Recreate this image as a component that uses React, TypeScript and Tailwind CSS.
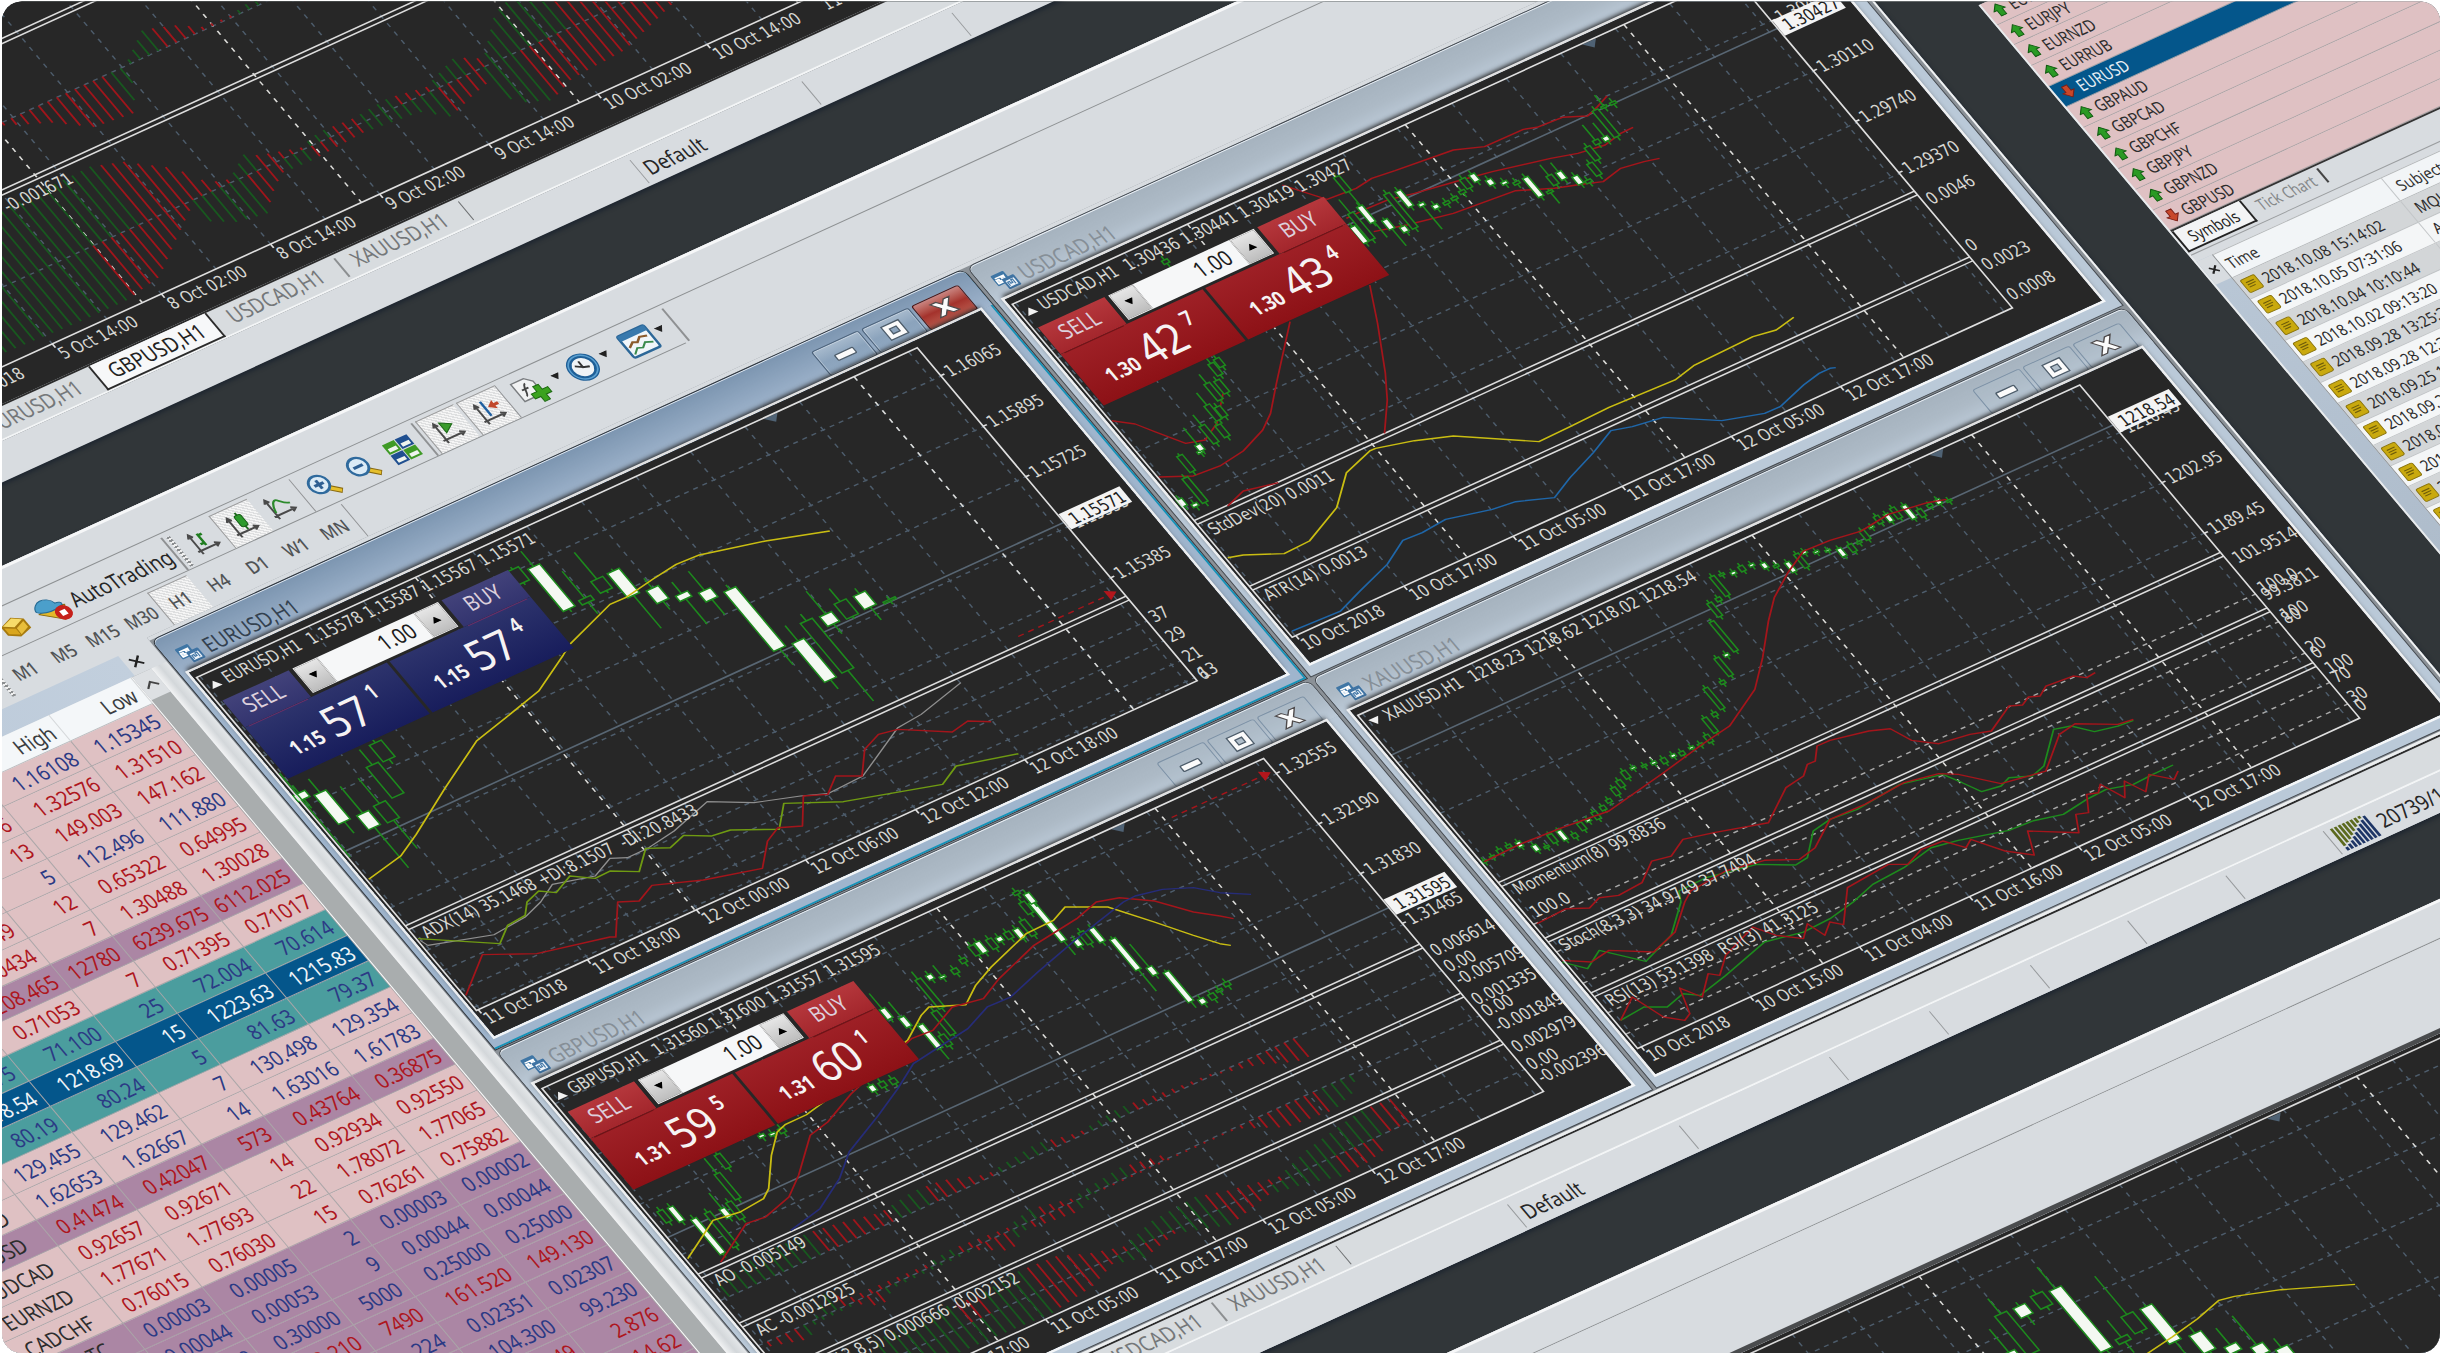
import React from 'react';

/* ------------------------------------------------------------------ */
/* Geometry: the desktop is a skewed plane; (u, v) are plane units.    */
/* Traces are stored per sheet cell: [column, row, x, y, x, y, ...]    */
/* ------------------------------------------------------------------ */
type Pt = [number, number];

function plane(col: number, row: number, x: number, y: number): Pt {
  const px = col * 610 + x / 2.5705;
  const py = row * 451 + y / 3;
  return [0.7943 * px - 0.6675 * py, 0.4316 * px + 0.9435 * py];
}

type Seg = number[];

function trace(segs: Seg[]): string {
  const out: string[] = [];
  segs.forEach((s) => {
    for (let i = 2; i < s.length; i += 2) {
      const [u, v] = plane(s[0], s[1], s[i], s[i + 1]);
      out.push(u.toFixed(1) + ',' + v.toFixed(1));
    }
  });
  return out.join(' ');
}

const GRID = '#4d5c6b';
const RED = '#a3151b';
const GREEN = '#1d8a1d';
const YELLOW = '#c9bd12';
const BLUE = '#1f66a8';
const NAVY = '#262c78';

/* Text stretched to the tall, narrow letterforms of the terminal */
function Tall({ children, className = '' }: { children: React.ReactNode; className?: string }) {
  return <span className={'inline-block scale-y-[1.22] ' + className}>{children}</span>;
}

function Line({ segs, color, w = 1.6 }: { segs: Seg[]; color: string; w?: number }) {
  return <polyline points={trace(segs)} fill="none" stroke={color} strokeWidth={w} strokeLinejoin="round" />;
}

/* candle: [x1, y1, x2, y2, filled, wickUp, wickDown] */
function Candles({ col, row, w, data }: { col: number; row: number; w: number; data: number[][] }) {
  return (
    <g>
      {data.map((c, i) => {
        const a = plane(col, row, c[0], c[1]);
        const b = plane(col, row, c[2], c[3]);
        const u = (a[0] + b[0]) / 2;
        const h = Math.max(2, b[1] - a[1]);
        const up = c[5] ?? 5;
        const dn = c[6] ?? 5;
        return (
          <g key={i} stroke={GREEN} strokeWidth={1.6}>
            <line x1={u} x2={u} y1={a[1] - up} y2={a[1]} />
            <line x1={u} x2={u} y1={a[1] + h} y2={a[1] + h + dn} />
            <rect x={u - w / 2} y={a[1]} width={w} height={h} fill={c[4] ? '#f4f8f2' : '#272727'} />
          </g>
        );
      })}
    </g>
  );
}

function T({ x, y, children, fill = '#d6d6d2', end = false }: { x: number; y: number; children: string; fill?: string; end?: boolean }) {
  return (
    <text
      transform={`translate(${x} ${y}) scale(0.885 1.14)`}
      fontSize={16}
      fill={fill}
      textAnchor={end ? 'end' : 'start'}
      fontFamily='"DejaVu Sans", sans-serif'
      className="whitespace-pre"
    >
      {children}
    </text>
  );
}

function VLines({ from, to, step, top, bottom }: { from: number; to: number; step: number; top: number; bottom: number }) {
  const xs: number[] = [];
  for (let x = from; x <= to; x += step) xs.push(x);
  return (
    <g stroke={GRID} strokeWidth={1.5} strokeDasharray="5 6">
      {xs.map((x) => (
        <line key={x} x1={x} x2={x} y1={top} y2={bottom} />
      ))}
    </g>
  );
}

function HLines({ ys, x1, x2, color = GRID }: { ys: number[]; x1: number; x2: number; color?: string }) {
  return (
    <g stroke={color} strokeWidth={1.5} strokeDasharray="5 5">
      {ys.map((y) => (
        <line key={y} x1={x1} x2={x2} y1={y} y2={y} />
      ))}
    </g>
  );
}

function Separators({ xs, top, bottom }: { xs: number[]; top: number; bottom: number }) {
  return (
    <g stroke="#dcdcd9" strokeWidth={1.6} strokeDasharray="5 6">
      {xs.map((x) => (
        <line key={x} x1={x} x2={x} y1={top} y2={bottom} />
      ))}
    </g>
  );
}

function DoubleLines({ ys, x1, x2 }: { ys: number[]; x1: number; x2: number }) {
  return (
    <g stroke="#dcdcdc" strokeWidth={1.6}>
      {ys.map((y) => (
        <g key={y}>
          <line x1={x1} x2={x2} y1={y - 2.5} y2={y - 2.5} />
          <line x1={x1} x2={x2} y1={y + 2.5} y2={y + 2.5} />
        </g>
      ))}
    </g>
  );
}

function lerp(keys: number[][], x: number): number {
  if (x < keys[0][0] || x > keys[keys.length - 1][0]) return 0;
  for (let i = 1; i < keys.length; i++) {
    if (x <= keys[i][0]) {
      const [a, p] = keys[i - 1];
      const [b, q] = keys[i];
      return p + ((q - p) * (x - a)) / (b - a || 1);
    }
  }
  return 0;
}

/* Histogram bars: green while growing away from zero, red while shrinking */
function Histogram({ zero, keys, dir, step = 10, flip = false }: { zero: number; keys: number[][]; dir: number; step?: number; flip?: boolean }) {
  const bars = [];
  for (let x = keys[0][0]; x <= keys[keys.length - 1][0]; x += step) {
    const h = lerp(keys, x);
    if (Math.abs(h) < 1) continue;
    const growing = lerp(keys, x - step) <= h;
    bars.push(
      <line key={x} x1={x} x2={x} y1={zero} y2={zero + dir * h} stroke={growing !== flip ? '#18581f' : '#a0151b'} strokeWidth={1.9} />,
    );
  }
  return <g>{bars}</g>;
}

interface FrameProps {
  u: number;
  v: number;
  header: string;
  open?: boolean;
  axis: number;
  seps: number[];
  ticks: [number, string][];
  prices: [number, string][];
  gridFrom: number;
  gridY: number[];
  days: number[];
  priceV: number;
  price: string;
  marker: number;
  children?: React.ReactNode;
}

function ChartArea(p: FrameProps) {
  const left = p.u + 12;
  const top = p.v + 55;
  const bottom = p.v + 490;
  return (
    <svg className="block h-[475px] w-[871px]" viewBox={`${p.u + 9} ${p.v + 47} 871 475`}>
      <rect x={p.u + 9} y={p.v + 47} width={871} height={475} fill="#272727" />
      <VLines from={p.gridFrom} to={p.axis - 3} step={59.95} top={top} bottom={bottom} />
      <HLines ys={p.gridY} x1={left} x2={p.axis} />
      <line x1={left} x2={p.axis} y1={p.priceV} y2={p.priceV} stroke="#586673" strokeWidth={1.7} />
      <DoubleLines ys={p.seps} x1={left} x2={p.axis} />
      <Separators xs={p.days} top={top} bottom={bottom} />
      {p.children}
      <path d={`M${p.marker - 8} ${top + 1}h15l-7 8z`} fill="#4f6274" />
      <path d={`M${left} ${bottom}V${top}H${p.axis}V${bottom}Z`} fill="none" stroke="#dedede" strokeWidth={1.7} />
      {p.ticks.map(([x, s]) => (
        <g key={s}>
          <line x1={x} x2={x} y1={bottom} y2={bottom + 5} stroke="#dedede" strokeWidth={1.7} />
          <T x={x - 1} y={bottom + 19}>
            {s}
          </T>
        </g>
      ))}
      {p.prices.map(([y, s], i) => (
        <g key={i}>
          {s.length === 7 && s.startsWith('1') && <line x1={p.axis} x2={p.axis + 4} y1={y - 5.5} y2={y - 5.5} stroke="#dedede" strokeWidth={1.7} />}
          <T x={p.axis + (s.startsWith('1') ? 6.5 : 5)} y={y}>
            {s}
          </T>
        </g>
      ))}
      <rect x={p.axis + 1} y={p.priceV - 10} width={67} height={20} fill="#f4f4f4" />
      <T x={p.axis + 7} y={p.priceV + 7} fill="#202020">
        {p.price}
      </T>
      <path d={p.open ? `M${left + 5} ${top + 18}l5.500 -8l5.500 8z` : `M${left + 5} ${top + 9}h11l-5.500 8z`} fill="#f2f2f2" />
      <T x={left + 21} y={top + 19}>
        {p.header}
      </T>
    </svg>
  );
}

/* ------------------------------------------------------------------ */
/* Window chrome                                                       */
/* ------------------------------------------------------------------ */
function ChartIcon() {
  return (
    <svg className="h-[24px] w-[22px]" viewBox="0 0 22 22" preserveAspectRatio="none">
      <rect x="1" y="2" width="14" height="12" rx="1" fill="#3f76a5" />
      <path d="M3 6h10M3 12V8h3v2h3V7h3v5z" stroke="#fff" strokeWidth="1.4" fill="#cfe0ee" />
      <rect x="8" y="9" width="13" height="12" rx="1" fill="#3f73a3" />
      <rect x="10" y="12" width="9" height="7" fill="#eef4fa" />
      <path d="M11 18v-4h2v2h2v-3h2v5" stroke="#4579a8" strokeWidth="1.2" fill="none" />
    </svg>
  );
}

function WinButton({ kind, active }: { kind: 'min' | 'max' | 'close'; active: boolean }) {
  const red = kind === 'close' && active;
  return (
    <div
      className={
        'flex h-[32px] w-[52px] items-center justify-center rounded-[3px] border ' +
        (red
          ? 'border-[#4b1210] bg-linear-to-b from-[#c98480] via-[#a4322c] to-[#bb5c50]'
          : active
            ? 'border-[#4a6078] bg-linear-to-b from-[#a7bacd] via-[#8ba3bc] to-[#90a8c1] shadow-[inset_0_0_0_1px_rgba(255,255,255,0.35)]'
            : 'border-[#7c91a6] bg-[#b0bdca]/40')
      }
    >
      <svg className="h-[23px] w-[27px]" viewBox="0 0 26 22" preserveAspectRatio="none">
        {kind === 'min' && <rect x="3.5" y="9" width="19" height="6.500" rx="1" fill="#fbfbfb" stroke="#4e5d6b" strokeWidth="1.3" />}
        {kind === 'max' && <path fillRule="evenodd" d="M4 3h18v16H4z M9.500 8h7v6h-7z" fill="#fbfbfb" stroke="#4e5d6b" strokeWidth="1.3" />}
        {kind === 'close' && (
          <path d="M3 3h6l4 4.500L17 3h6l-6.500 8L23 19h-6l-4-4.500L9 19H3l6.500-8z" fill="#fbfbfb" stroke="#4e4a4b" strokeWidth="1.2" />
        )}
      </svg>
    </div>
  );
}

function Quote({ base, big, sup }: { base: string; big: string; sup: string }) {
  return (
    <div className="flex h-[66px] flex-1 items-end pb-[17px] pl-[22px] leading-none text-[#f6f3f3]">
      <span className="w-[43px] text-[17.5px] leading-[15px] font-bold">
        <Tall className="origin-bottom">{base}</Tall>
      </span>
      <span className="w-[50px] text-[43px] leading-[32px] font-normal">
        <span className="inline-block origin-bottom-left scale-x-[0.93] scale-y-[1.08]">{big}</span>
      </span>
      <span className="self-start pt-[10px] pl-[4px] text-[18.5px] leading-[18px] font-semibold">
        <Tall>{sup}</Tall>
      </span>
    </div>
  );
}

function TradePanel({ tone, base, sell, buy }: { tone: 'blue' | 'red'; base: string; sell: [string, string]; buy: [string, string] }) {
  const head = tone === 'blue' ? 'bg-linear-to-b from-[#42427a] to-[#33346f]' : 'bg-linear-to-b from-[#b5373c] to-[#a3262c]';
  const body = tone === 'blue' ? 'bg-linear-to-b from-[#2d336c] to-[#181d5c]' : 'bg-linear-to-b from-[#9e2026] to-[#8d1116]';
  const rule = tone === 'blue' ? 'border-[#6c2f68]' : 'border-[#6f1216]';
  return (
    <div className="absolute top-[87px] left-[16px] flex h-[102px] w-[314px] flex-col">
      <div className="flex h-[36px]">
        <div className={'flex w-[73px] flex-col items-center justify-end pr-[4px] ' + head}>
          <span className="pb-[9px] text-[19px] leading-[22px] text-[#ddd0dc]"><Tall>SELL</Tall></span>
        </div>
        <div className="flex w-[168px] bg-[#272727] px-[4px] pb-[3px]">
          <div className="flex w-[27px] items-center justify-center border border-[#eee] bg-linear-to-b from-[#e6e6e6] to-[#bdbdbd]">
            <svg className="h-[7px] w-[9px]" viewBox="0 0 9 7"><path d="M0 0h9L4.500 7z" /></svg>
          </div>
          <div className="flex flex-1 items-center justify-end bg-[#f6f7f8] pr-[10px] text-[19px] text-[#1c1c1c]"><Tall>1.00</Tall></div>
          <div className="flex w-[27px] items-center justify-center border border-[#eee] bg-linear-to-b from-[#e6e6e6] to-[#bdbdbd]">
            <svg className="h-[7px] w-[9px]" viewBox="0 0 9 7"><path d="M0 7h9L4.500 0z" /></svg>
          </div>
        </div>
        <div className={'flex flex-1 flex-col items-center justify-end pr-[4px] ' + head}>
          <span className="pb-[9px] text-[19px] leading-[22px] text-[#ddd0dc]"><Tall>BUY</Tall></span>
        </div>
      </div>
      <div className="flex flex-1 gap-[3px] bg-[#272727]">
        <div className={'flex-1 ' + body}>
          <div className={'ml-[4px] w-[65px] border-t-[1.5px] ' + rule} />
          <Quote base={base} big={sell[0]} sup={sell[1]} />
        </div>
        <div className={'flex-1 ' + body}>
          <div className={'mr-[4px] ml-auto w-[65px] border-t-[1.5px] ' + rule} />
          <Quote base={base} big={buy[0]} sup={buy[1]} />
        </div>
      </div>
    </div>
  );
}

function ChartWindow({ title, active = false, place, panel, children }: { title: string; active?: boolean; place: string; panel?: React.ReactNode; children: React.ReactNode }) {
  return (
    <section
      className={
        'absolute flex h-[536px] w-[894px] flex-col rounded-t-[8px] border-[1.5px] ' +
        place +
        (active ? ' border-[#30363d] bg-[#9fb5cd] shadow-[inset_-2px_-2px_0_#1593b8]' : ' border-[#454a50] bg-[#bac9d8]')
      }
    >
      <header
        className={
          'flex h-[46px] shrink-0 items-start rounded-t-[7px] border-t-[1.5px] border-white/70 pr-[14px] pl-[11px] ' +
          (active ? 'bg-linear-to-b from-[#7d96b1] to-[#9fb4cc]' : 'bg-linear-to-b from-[#a6b3bf] via-[#adbac6] to-[#bdcbd9]')
        }
      >
        <div className="flex flex-1 items-center gap-[5px] pt-[15px]">
          <ChartIcon />
          <span className={'text-[18.5px] leading-[24px] ' + (active ? 'text-[#33414f]' : 'text-[#868f97]')}><Tall>{title}</Tall></span>
        </div>
        <div className="flex gap-[3px] pt-[11px]">
          <WinButton kind="min" active={active} />
          <WinButton kind="max" active={active} />
          <WinButton kind="close" active={active} />
        </div>
      </header>
      <div className="ml-[7.5px] h-[475px] w-[871px] shadow-[0_0_0_2.5px_rgba(255,255,255,0.85),0_-4px_5px_#222]">{children}</div>
      {panel}
    </section>
  );
}

/* ------------------------------------------------------------------ */
/* Charts                                                              */
/* ------------------------------------------------------------------ */
function EurUsd() {
  return (
    <ChartArea
      u={-308} v={669} open header="EURUSD,H1  1.15578 1.15587 1.15567 1.15571"
      axis={496.5} seps={[1051]} gridFrom={-292.5} days={[-55.5, 427]}
      gridY={[761, 827, 892.5, 958, 1025, 1081, 1107, 1133, 1155]}
      ticks={[[-294, '11 Oct 2018'], [-174, '11 Oct 18:00'], [-54, '12 Oct 00:00'], [66, '12 Oct 06:00'], [187, '12 Oct 12:00'], [307, '12 Oct 18:00']]}
      prices={[[766, '1.16065'], [832, '1.15895'], [898, '1.15725'], [964, '1.15555'], [1030, '1.15385'], [1086, '37'], [1112, '29'], [1138, '21'], [1160, '13'], [1161, '6']]}
      priceV={952} price="1.15571" marker={335}
    >
      <Candles col={0} row={1} w={13} data={[
        [770, 1025, 780, 1045, 1, 10, 12], [828, 1022, 880, 1115, 1, 18, 15], [935, 1085, 960, 1130, 1, 35, 53],
        [980, 1055, 1007, 1110, 0, 33, 37], [960, 940, 1020, 1035, 0, 20, 0], [960, 878, 1005, 922, 0, 8, 6],
        [1375, 345, 1460, 475, 1, 20, 4], [1318, 355, 1345, 395, 0, 3, 3], [1505, 440, 1510, 455, 0, 35, 15], [1533, 385, 1560, 418, 0, 35, 3],
      ]} />
      <Candles col={1} row={1} w={13} data={[
        [12, 358, 57, 435, 1, 3, 43], [112, 410, 133, 452, 1, 13, 11], [185, 427, 194, 444, 1, 15, 33], [243, 418, 262, 445, 1, 25, 20],
        [312, 413, 432, 595, 1, 6, 21], [487, 568, 563, 688, 1, 20, 12], [508, 508, 608, 660, 0, 9, 40], [557, 488, 572, 520, 1, 30, 13],
        [595, 450, 620, 498, 0, 17, 3], [645, 426, 665, 470, 1, 7, 17], [718, 445, 719, 449, 0, 4, 4],
      ]} />
      <line x1={-294} x2={-294} y1={850} y2={960} stroke={GREEN} strokeWidth={1.6} />
      <Line color={YELLOW} segs={[[0, 1, 948, 1285, 1030, 1215, 1070, 1150, 1145, 1010, 1225, 870, 1300, 800, 1385, 720, 1448, 612, 1465, 580, 1568, 460], [1, 1, 40, 440, 110, 385, 170, 340, 230, 312, 400, 270, 565, 240]]} />
      <Line color="#8f8f8f" segs={[[0, 2, 1080, 115, 1100, 130, 1270, 98, 1350, 45, 1390, 0], [0, 1, 1420, 1300, 1530, 1275], [1, 1, 0, 1222, 45, 1220, 100, 1190, 165, 1140, 250, 1052, 370, 1055, 490, 1035, 560, 1028, 650, 975, 740, 830, 800, 790, 902, 695]]} w={1.3} />
      <Line color="#6f9a12" segs={[[0, 2, 1075, 110, 1285, 125, 1305, 70, 1350, 40, 1355, 0], [0, 1, 1385, 1320, 1430, 1325, 1465, 1275, 1530, 1282], [1, 1, 0, 1260, 75, 1262, 92, 1192, 155, 1190, 190, 1153, 260, 1155, 310, 1137, 435, 1135, 447, 1057, 600, 1052, 855, 1000, 890, 945, 1050, 908]]} />
      <Line color={RED} segs={[[0, 2, 1198, 280, 1240, 158, 1380, 155, 1568, 105], [1, 2, 15, 105, 20, 0], [1, 1, 75, 1350, 108, 1303, 240, 1287, 392, 1252, 405, 1170, 432, 1130, 495, 1125, 497, 1035, 560, 1030, 580, 975, 648, 975, 655, 895, 690, 850, 740, 835, 880, 843, 920, 810, 980, 812]]} />
      <line x1={384} x2={484} y1={1040} y2={1040} stroke={RED} strokeWidth={1.5} strokeDasharray="6 5" />
      <path d="M482 1034l10 6l-10 6z" fill="#b3161c" />
      <T x={-287} y={1070}>ADX(14) 35.1468 +DI:8.1507  -DI:20.8433</T>
    </ChartArea>
  );
}

function GbpUsd() {
  return (
    <ChartArea
      u={-308} v={1206} open header="GBPUSD,H1  1.31560 1.31600 1.31557 1.31595"
      axis={497.5} seps={[1506, 1570, 1631.5]} gridFrom={-290.500} days={[-102, 138, 378]}
      gridY={[1281, 1347, 1412.5, 1478, 1538, 1597, 1667]}
      ticks={[[-290, '10 Oct 2018'], [-170, '10 Oct 17:00'], [-50, '11 Oct 05:00'], [70, '11 Oct 17:00'], [189, '12 Oct 05:00'], [309, '12 Oct 17:00']]}
      prices={[[1286, '1.32555'], [1352, '1.32190'], [1417, '1.31830'], [1482, '1.31465'], [1522, '0.006614'], [1543, '0.00'], [1560, '-0.005709'], [1586, '0.001335'], [1601, '0.00'], [1621, '-0.001849'], [1648, '0.002979'], [1671, '0.00'], [1688, '-0.002396']]}
      priceV={1455.8} price="1.31595" marker={337}
    >
      <Histogram zero={1538} dir={-1} keys={[[-286, 18], [-240, 26], [-180, 26], [-150, 22], [-110, 14], [-70, 20], [-40, 18], [0, 4], [60, 12], [100, 4], [150, 10], [200, 5], [250, 2]]} />
      <Histogram zero={1538} dir={1} flip keys={[[254, 2], [290, 10], [320, 23], [334, 24]]} />
      <Histogram zero={1597} dir={1} flip keys={[[-286, 6], [-250, 16], [-235, 4], [-190, 3], [-170, 16], [-150, 4], [-60, 3], [-30, 20], [-10, 6], [50, 12], [70, 2], [230, 2], [270, 22], [320, 26], [345, 18], [360, 2]]} />
      <Histogram zero={1597} dir={-1} keys={[[-230, 4], [-210, 20], [-190, 6], [-110, 4], [-80, 8], [-20, 4], [10, 12], [50, 4], [110, 12], [150, 6]]} />
      <Histogram zero={1667} dir={-1} keys={[[-200, 24], [-120, 26], [-90, 22], [-40, 28], [0, 26], [30, 14], [60, 6], [100, 18], [150, 22], [180, 14], [230, 5], [270, 18], [340, 32], [370, 30]]} />
      <Histogram zero={1667} dir={1} keys={[[-200, 22], [-100, 24], [-40, 26], [10, 18], [40, 6], [70, 14], [110, 4], [160, 20], [210, 8], [250, 14], [280, 22], [310, 20], [330, 16]]} />
      <Candles col={1} row={2} w={6} data={[
        [130, 925, 150, 960, 0], [155, 915, 185, 958, 1], [215, 950, 290, 1055, 1], [262, 925, 312, 1040, 0], [290, 918, 305, 948, 1, 20], [305, 900, 340, 950, 0],
        [275, 815, 330, 890, 0, 20], [280, 755, 300, 800, 0], [388, 698, 392, 706, 1], [416, 693, 420, 700, 1], [435, 680, 450, 690, 0],
        [670, 550, 680, 568, 1], [697, 540, 705, 555, 0], [725, 530, 733, 545, 0], [700, 320, 720, 350, 1, 20], [750, 345, 768, 375, 1, 20], [798, 368, 848, 440, 1, 3, 14],
        [850, 400, 875, 430, 0], [830, 330, 885, 395, 0], [795, 230, 850, 320, 0, 10], [818, 218, 828, 232, 1], [853, 222, 857, 228, 1, 14], [885, 200, 890, 215, 0], [905, 170, 912, 182, 0],
        [930, 130, 945, 160, 0], [943, 120, 965, 152, 1], [975, 110, 990, 140, 0], [998, 105, 1006, 118, 1], [1020, 90, 1030, 110, 0], [1043, 80, 1062, 110, 1], [1060, 55, 1090, 100, 0],
        [1060, 0, 1080, 35, 0], [1085, 0, 1165, 118, 1, 8, 18], [1195, 112, 1210, 132, 1], [1210, 90, 1235, 125, 0], [1238, 78, 1265, 120, 1], [1292, 110, 1358, 203, 1, 3, 28],
        [1385, 195, 1403, 218, 1, 30], [1428, 210, 1495, 298, 1, 3, 8], [1518, 290, 1528, 305, 1], [1545, 275, 1553, 292, 0], [1565, 262, 1568, 268, 0],
      ]} />
      <Candles col={1} row={1} w={6} data={[[1042, 1322, 1048, 1330, 0], [1065, 1330, 1095, 1353, 1]]} />
      <Candles col={2} row={2} w={6} data={[[16, 240, 20, 252, 0]]} />
      <Line color={YELLOW} segs={[[1, 2, 200, 1070, 265, 955, 335, 930, 395, 890, 408, 860, 415, 760, 430, 690, 450, 668, 505, 638, 765, 415, 800, 340, 820, 315, 915, 308, 940, 250, 980, 195, 1070, 95, 1140, 55, 1170, 15, 1280, 15, 1400, 60, 1500, 100], [2, 2, 0, 125, 28, 130]]} />
      <Line color={RED} segs={[[1, 2, 285, 1080, 350, 965, 400, 945, 460, 885, 485, 820, 515, 700, 560, 660, 620, 575, 775, 410, 830, 385, 880, 315, 960, 290, 1000, 230, 1090, 130, 1200, 50], [1, 1, 1250, 1353, 1310, 1340, 1400, 1350], [1, 2, 1500, 30], [2, 2, 0, 42, 35, 50]]} />
      <Line color={NAVY} segs={[[1, 2, 465, 985, 540, 920, 590, 830, 615, 750, 690, 640, 740, 560, 780, 485, 840, 440, 920, 380, 970, 315, 1030, 285, 1100, 210, 1200, 110, 1320, 0], [1, 1, 1350, 1335, 1420, 1315, 1500, 1310], [2, 1, 0, 1325, 80, 1330]]} />
      <line x1={385} x2={487} y1={1277} y2={1277} stroke={RED} strokeWidth={1.5} strokeDasharray="6 5" />
      <path d="M484 1271l10 6l-10 6z" fill="#b3161c" />
      <T x={-287} y={1524}>AO -0.005149</T>
      <T x={-287} y={1589}>AC -0.0012925</T>
      <T x={-44} y={1650} end>Gator(13,8,5) 0.000666 -0.002152</T>
    </ChartArea>
  );
}

function UsdCad() {
  return (
    <ChartArea
      u={589} v={669} open header="USDCAD,H1  1.30436 1.30441 1.30419 1.30427"
      axis={1393} seps={[1009, 1095]} gridFrom={604.500} days={[793.5, 1033, 1273.5]}
      gridY={[784, 850, 917, 983.5]}
      ticks={[[605, '10 Oct 2018'], [724, '10 Oct 17:00'], [844, '11 Oct 05:00'], [964, '11 Oct 17:00'], [1084, '12 Oct 05:00'], [1204, '12 Oct 17:00']]}
      prices={[[790, '1.30480'], [855, '1.30110'], [921, '1.29740'], [988, '1.29370'], [1027, '0.0046'], [1088, '0'], [1113, '0.0023'], [1152, '0.0008']]}
      priceV={794} price="1.30427" marker={1235}
    >
      <Line color={RED} segs={[[2, 0, 160, 555, 275, 598, 350, 565, 390, 535, 450, 512, 600, 450, 680, 440, 780, 388, 815, 382, 880, 352, 945, 348, 970, 320, 995, 288]]} />
      <Line color={RED} segs={[[2, 0, 325, 655, 370, 630, 430, 600, 500, 580, 620, 540, 700, 515, 850, 475, 920, 460, 990, 435, 1030, 400, 1062, 382]]} />
      <Line color={RED} segs={[[2, 0, 395, 695, 480, 675, 600, 640, 760, 572, 860, 565, 935, 552, 985, 545, 1030, 505, 1090, 485, 1130, 475]]} />
      <Line color={RED} segs={[[2, 0, 385, 855, 405, 970, 425, 1120, 430, 1200, 423, 1300]]} />
      <Line color={RED} segs={[[2, 0, 180, 965, 145, 1150, 130, 1240, 110, 1290, 60, 1353], [2, 1, 0, 45], [1, 1, 1500, 75, 1410, 78]]} />
      <Line color={RED} segs={[[1, 0, 1290, 1262, 1350, 1272, 1400, 1295, 1480, 1330, 1530, 1320, 1560, 1270], [2, 0, 8, 1180]]} />
      <Line color={RED} segs={[[2, 1, 150, 95, 60, 120, 20, 165]]} />
      <Line color={YELLOW} segs={[[2, 1, 20, 320, 60, 312, 165, 308, 230, 270, 300, 170, 325, 65, 385, 0], [2, 0, 400, 1345, 500, 1322, 600, 1308, 820, 1325, 900, 1280, 1000, 1222, 1170, 1140, 1220, 1095, 1370, 1010, 1430, 990, 1475, 952]]} />
      <Line color={BLUE} segs={[[2, 1, 185, 540, 310, 480, 360, 420, 430, 340, 470, 268, 520, 245, 580, 205, 700, 175, 760, 152, 860, 140, 900, 80, 960, 5], [2, 0, 1005, 1292, 1060, 1280, 1140, 1252, 1290, 1262, 1400, 1240, 1440, 1220, 1500, 1155, 1540, 1120, 1568, 1105], [3, 0, 15, 1103]]} />
      <Candles col={2} row={0} w={6} data={[
        [300, 530, 330, 575, 0, 3, 60], [335, 640, 392, 718, 0, 18], [360, 618, 392, 668, 1], [340, 680, 375, 728, 1], [425, 658, 440, 688, 1, 3, 22], [430, 580, 500, 685, 0], [458, 572, 490, 620, 1],
        [468, 680, 480, 695, 1], [515, 610, 522, 618, 1, 3, 30], [550, 615, 560, 625, 1], [580, 605, 585, 612, 0], [600, 592, 606, 598, 0], [620, 572, 626, 580, 0], [625, 535, 640, 565, 0],
        [648, 522, 660, 545, 1], [690, 538, 700, 555, 1], [728, 545, 735, 552, 1], [760, 545, 765, 552, 0], [785, 532, 825, 590, 1], [846, 572, 850, 578, 0, 2, 14], [848, 525, 862, 555, 0, 14], [870, 515, 885, 538, 1, 12],
        [912, 528, 928, 552, 1], [945, 540, 950, 548, 0], [950, 490, 975, 525, 0], [945, 440, 970, 480, 0], [965, 420, 972, 432, 0, 20], [988, 410, 997, 422, 1, 18], [965, 330, 1020, 410, 0], [985, 318, 990, 322, 0, 14], [1008, 306, 1013, 312, 0],
      ]} />
      <Candles col={1} row={1} w={6} data={[[1462, 145, 1478, 165, 1], [1500, 158, 1508, 166, 1], [1480, 80, 1528, 155, 0], [1462, 15, 1500, 60, 0, 3], [1515, 0, 1520, 6, 1]]} />
      <Candles col={1} row={0} w={6} data={[[1508, 1335, 1525, 1350, 1, 22], [1525, 1275, 1555, 1330, 0, 14], [1535, 1215, 1565, 1260, 0, 16], [1535, 1150, 1568, 1200, 0, 12], [1545, 1090, 1568, 1125, 0, 12], [1425, 780, 1432, 790, 0]]} />
      <Candles col={2} row={0} w={6} data={[[-5, 1275, 18, 1310, 0], [-6, 1220, 12, 1250, 0], [-6, 1140, 15, 1180, 0], [-8, 1075, 5, 1100, 0]]} />
      <T x={607} y={1029}>StdDev(20) 0.0011</T>
      <T x={607} y={1115}>ATR(14) 0.0013</T>
    </ChartArea>
  );
}

/* dense candle: [x, y, bodyLength, filled] */
const dense = (rows: number[][]) => rows.map(([x, y, l, f]) => [x - l * 0.3, y, x + l * 0.3, y + l, f, 4, 4]);

function XauUsd() {
  return (
    <ChartArea
      u={589} v={1206} header="XAUUSD,H1  1218.23 1218.62 1218.02 1218.54"
      axis={1395} seps={[1482, 1554.5, 1626]} gridFrom={606} days={[805, 1034.5, 1276]}
      gridY={[1323, 1389, 1454.5]}
      ticks={[[605, '10 Oct 2018'], [725, '10 Oct 15:00'], [845, '11 Oct 04:00'], [966, '11 Oct 16:00'], [1086, '12 Oct 05:00'], [1206, '12 Oct 17:00']]}
      prices={[[1328, '1216.45'], [1394, '1202.95'], [1460, '1189.45'], [1498, '101.9514'], [1537, '100.0'], [1545, '99.3811'], [1572, '100'], [1576, '80'], [1614, '20'], [1621, '0'], [1642, '100'], [1653, '70'], [1679, '30'], [1690, '0']]}
      priceV={1313} price="1218.54" marker={1237}
    >
      <HLines ys={[1534, 1570, 1611, 1649.5, 1677.500]} x1={601} x2={1395} color="#a9a9a9" />
      <Candles col={2} row={1} w={5} data={dense([
        [680, 1228, 6, 0], [700, 1215, 4, 0], [720, 1195, 12, 0], [742, 1182, 8, 0], [770, 1172, 16, 1], [812, 1182, 18, 1], [840, 1185, 5, 0], [855, 1150, 25, 0], [880, 1138, 30, 1], [912, 1148, 12, 0], [930, 1115, 22, 0],
        [947, 1105, 7, 1], [967, 1082, 22, 0], [985, 1065, 12, 0], [1000, 1045, 9, 0], [1017, 1010, 22, 0], [1030, 988, 20, 0], [1043, 960, 22, 0], [1062, 948, 6, 1], [1090, 942, 3, 0], [1115, 932, 7, 1], [1142, 922, 14, 0],
        [1165, 910, 8, 1], [1188, 902, 10, 0], [1212, 887, 6, 1], [1235, 878, 6, 0], [1256, 852, 22, 0], [1260, 800, 45, 0], [1272, 785, 10, 0], [1270, 710, 65, 0], [1292, 690, 8, 0], [1295, 620, 55, 0], [1302, 608, 8, 1],
        [1295, 510, 92, 0], [1272, 455, 42, 0], [1282, 440, 10, 0], [1285, 375, 60, 0], [1290, 368, 5, 0], [1320, 362, 8, 1], [1342, 345, 15, 0], [1367, 339, 7, 1], [1400, 336, 16, 1], [1430, 342, 6, 0], [1467, 333, 30, 1],
        [1495, 308, 42, 0], [1502, 300, 8, 1], [1533, 300, 6, 1], [1562, 296, 4, 1],
      ])} />
      <Candles col={3} row={1} w={5} data={dense([
        [30, 292, 24, 1], [57, 280, 22, 0], [75, 272, 5, 0], [90, 238, 28, 0], [107, 226, 5, 1], [125, 195, 22, 0], [151, 188, 24, 1], [170, 170, 32, 0], [203, 162, 42, 1], [235, 175, 22, 0], [257, 160, 8, 0], [279, 145, 14, 1], [306, 147, 4, 0],
      ])} />
      <Line color={RED} segs={[[2, 1, 680, 1232, 770, 1180, 880, 1130, 1000, 1080, 1140, 965, 1240, 880, 1310, 825, 1375, 715, 1395, 620, 1410, 510, 1425, 440, 1460, 365, 1500, 300, 1568, 268], [3, 1, 80, 240, 150, 190, 250, 155, 300, 145]]} />
      <Line color={RED} segs={[[2, 2, 815, 65, 890, 20, 950, 18], [2, 1, 975, 1340, 1025, 1333, 1085, 1295, 1110, 1230, 1160, 1215, 1190, 1165, 1270, 1145, 1410, 1115, 1455, 1010, 1500, 975, 1510, 940, 1530, 930, 1535, 885, 1568, 868], [3, 1, 100, 840, 155, 833, 210, 868, 280, 878, 360, 850, 415, 840, 460, 765, 495, 762, 510, 738, 540, 735, 555, 705, 625, 675, 660, 680, 682, 665]]} />
      <Line color={GREEN} segs={[[2, 2, 880, 180, 945, 200, 975, 145, 1095, 178, 1160, 100, 1185, 0], [2, 1, 1180, 1320, 1250, 1280, 1380, 1240, 1480, 1242, 1510, 1220, 1525, 1140, 1568, 1105], [3, 1, 70, 1075, 180, 1000, 290, 970, 340, 995, 390, 1022, 440, 1005, 460, 980, 520, 975, 550, 945, 575, 835, 620, 825, 680, 842, 740, 825, 780, 808]]} />
      <Line color={RED} segs={[[2, 2, 880, 175, 955, 180, 1000, 145, 1115, 150, 1170, 90], [2, 1, 1195, 1353, 1210, 1320, 1300, 1260, 1400, 1228, 1490, 1225, 1530, 1190, 1568, 1105], [3, 1, 90, 1060, 190, 995, 280, 968, 330, 970, 440, 998, 555, 960, 590, 850, 630, 818, 740, 820, 780, 805]]} />
      <Line color={GREEN} segs={[[2, 2, 1030, 355, 1090, 315, 1150, 315, 1190, 275, 1235, 280, 1300, 220, 1400, 120, 1500, 90, 1568, 50], [3, 1, 60, 1353, 110, 1300, 190, 1250, 260, 1190, 330, 1168, 460, 1138, 520, 1110, 600, 1090, 660, 1045, 710, 1015, 780, 1000, 830, 970, 882, 942]]} />
      <Line color={RED} segs={[[2, 2, 1030, 355, 1060, 285, 1140, 345, 1195, 355, 1208, 335, 1182, 258, 1240, 285, 1255, 215, 1285, 220, 1300, 160, 1370, 75, 1430, 100, 1500, 110, 1510, 65, 1555, 100, 1568, 60], [3, 2, 35, 68], [3, 1, 45, 1310, 150, 1240, 200, 1240, 235, 1195, 290, 1170, 350, 1190, 362, 1165, 450, 1200, 525, 1212, 508, 1140, 640, 1145, 632, 1090, 665, 1085, 660, 1030, 690, 1025, 695, 1000, 758, 1040, 757, 990, 812, 1022, 820, 970, 885, 985, 895, 960]]} />
      <T x={609} y={1500}>Momentum(8) 99.8836</T>
      <T x={607} y={1529}>100.0</T>
      <T x={608} y={1573}>Stoch(8,3,3) 34.9749 37.7494</T>
      <T x={608} y={1645}>RSI(13) 53.1398  RSI(3) 41.3125</T>
    </ChartArea>
  );
}

/* Maximised chart of the upper terminal */
function UpperChart() {
  const ticks: [number, string][] = [[-308, '5 Oct 2018'], [-188, '5 Oct 14:00'], [-68, '8 Oct 02:00'], [52, '8 Oct 14:00'], [172, '9 Oct 02:00'], [292, '9 Oct 14:00'], [412, '10 Oct 02:00'], [532, '10 Oct 14:00'], [651, '11 Oct 02:00']];
  return (
    <svg className="block h-[402px] w-[2408px] shrink-0" viewBox="-920 -20 2408 402">
      <rect x={-920} y={-20} width={2408} height={402} fill="#272727" />
      <VLines from={-308} to={900} step={60} top={-20} bottom={347} />
      <HLines ys={[116.4, 272]} x1={-400} x2={900} />
      <DoubleLines ys={[39.5, 182.500]} x1={-400} x2={900} />
      <Separators xs={[-89, 152, 392, 632]} top={-20} bottom={347} />
      <Histogram zero={116.4} dir={1} flip keys={[[-80, 4], [-40, 22], [-10, 44], [30, 48], [45, 30], [55, 8]]} />
      <Histogram zero={116.4} dir={-1} keys={[[62, 5], [93, 27], [122, 17], [142, 4], [170, 2], [200, 8], [225, 3]]} />
      <Histogram zero={116.4} dir={1} flip keys={[[232, 8], [246, 20], [270, 16]]} />
      <Histogram zero={272} dir={-1} keys={[[-300, 60], [-150, 72], [-40, 76], [-10, 66], [21, 42], [33, 28], [43, 10], [63, 4], [90, 21], [102, 14], [140, 3], [165, 10], [200, 8], [243, 12], [280, 6], [322, 22], [345, 8], [384, 46], [430, 62], [470, 58], [520, 40], [560, 20]]} />
      <Histogram zero={272} dir={1} keys={[[-300, 60], [-150, 66], [-100, 66], [-58, 58], [-20, 30], [11, 8], [20, 28], [41, 40], [71, 45], [85, 30], [108, 13], [140, 14], [200, 10], [259, 15], [281, 33], [312, 22], [331, 17], [342, 48], [372, 61], [402, 49], [463, 45], [508, 30], [560, 12]]} />
      <line x1={-400} x2={900} y1={347} y2={347} stroke="#dedede" strokeWidth={1.7} />
      {ticks.map(([x, s]) => (
        <g key={s}>
          <line x1={x} x2={x} y1={347} y2={352} stroke="#dedede" strokeWidth={1.7} />
          <T x={x - 1} y={367}>{s}</T>
        </g>
      ))}
      <T x={-62} y={204} end>Gator(13,8,5) 0.000429 -0.001671</T>
    </svg>
  );
}

/* Maximised chart of the lower terminal */
function LowerChart() {
  return (
    <svg className="block h-[320px] w-[2408px] shrink-0" viewBox="-920 2028 2408 320">
      <rect x={-920} y={2028} width={2408} height={320} fill="#272727" />
      <VLines from={533} to={1480} step={60} top={2032} bottom={2348} />
      <HLines ys={[2058, 2124, 2190, 2257, 2323]} x1={-300} x2={1488} />
      <Separators xs={[672.5, 1153.4]} top={2032} bottom={2348} />
      <line x1={-920} x2={1488} y1={2032.500} y2={2032.500} stroke="#d8d8d8" strokeWidth={1.7} />
      <path d="M1054 2034h15l-7 8z" fill="#4f6274" />
      <Candles col={3} row={2} w={13} data={[
        [582, 1158, 708, 1345, 1, 28, 4], [490, 1210, 503, 1243, 1, 5, 12], [533, 1175, 555, 1215, 0, 6, 5], [440, 1235, 522, 1353, 0, 20, 0], [460, 1350, 480, 1380, 1, 30, 0],
        [768, 1235, 795, 1290, 0, 50, 3], [750, 1305, 758, 1320, 0, 22, 14], [815, 1212, 885, 1320, 1, 3, 20], [940, 1293, 975, 1348, 1, 8, 20], [1030, 1328, 1042, 1350, 1, 22, 20], [1098, 1328, 1115, 1356, 1, 38, 20], [1163, 1335, 1260, 1480, 1, 12, 20],
      ]} />
      <Line color={YELLOW} segs={[[3, 2, 790, 1375, 818, 1353, 880, 1305, 945, 1250, 1000, 1195, 1040, 1183, 1160, 1163, 1350, 1147]]} />
    </svg>
  );
}

/* ------------------------------------------------------------------ */
/* Terminal chrome                                                     */
/* ------------------------------------------------------------------ */
function TabBar() {
  return (
    <div className="flex h-[35px] shrink-0 items-start border-t-[2px] border-b-[2px] border-t-[#2b2b2b] border-b-[#f3f5f6] bg-[#d8dcdf] pl-[608px] text-[18.5px] leading-[27px] text-[#75787a]">
      <span className="w-[137px] pl-[17px]"><Tall>EURUSD,H1</Tall></span>
      <span className="h-[31px] w-[130px] border-r-[2px] border-b-[2px] border-l-[2px] border-[#2b2b2b] bg-[#f7f8f9] pl-[12px] text-[#222]"><Tall>GBPUSD,H1</Tall></span>
      <span className="w-[137px] pl-[15px]"><Tall>USDCAD,H1</Tall></span>
      <span className="mt-[4px] h-[24px] w-[1.5px] bg-[#8c8f91]" />
      <span className="w-[135px] pl-[13px]"><Tall>XAUUSD,H1</Tall></span>
      <span className="mt-[4px] h-[24px] w-[1.5px] bg-[#6c6f71]" />
    </div>
  );
}

const TRAFFIC = [4, 6, 8, 11, 14, 17, 20, 23, 26];

function StatusBar({ traffic = false }: { traffic?: boolean }) {
  return (
    <div className="flex h-[38.500px] shrink-0 items-end bg-[#d8dce0] pb-[3px] pl-[1313px] text-[18.5px] leading-[26px] text-[#262626]">
      <span className="h-[30px] w-[189px] border-l-[1.5px] border-[#96999b] pt-[2px] pl-[6px]"><Tall>Default</Tall></span>
      <span className="h-[30px] w-[165px] border-l-[1.5px] border-[#96999b]" />
      <span className="h-[30px] w-[110px] border-l-[1.5px] border-[#96999b]" />
      <span className="h-[30px] w-[111px] border-l-[1.5px] border-[#96999b]" />
      <span className="h-[30px] w-[107px] border-l-[1.5px] border-[#96999b]" />
      <span className="h-[30px] w-[108px] border-l-[1.5px] border-[#96999b]" />
      <span className="h-[30px] w-[107px] border-l-[1.5px] border-[#96999b]" />
      {traffic && (
        <span className="flex h-[30px] items-center gap-[5px] border-l-[1.5px] border-[#96999b] pl-[5px] whitespace-nowrap">
          <svg className="h-[30px] w-[40px] shrink-0" viewBox="0 0 40 30">
            {TRAFFIC.map((h, i) => (
              <g key={i}>
                <rect x={1 + i * 4.3} y={1} width={2.8} height={26 - h} fill="#5c6a1e" />
                <rect x={1 + i * 4.3} y={29 - h} width={2.8} height={h} fill="#1d3566" />
              </g>
            ))}
          </svg>
          <Tall>20739/16 kb</Tall>
        </span>
      )}
    </div>
  );
}

function Axes({ children }: { children?: React.ReactNode }) {
  return (
    <svg className="h-[32px] w-[30px]" viewBox="0 0 30 30" preserveAspectRatio="none">
      <path d="M7 27V5M4 23h22M4.500 8L7 4l2.500 4M23 20.500l4 2.500l-4 2.500" stroke="#4a4a4a" strokeWidth="2" fill="none" />
      {children}
    </svg>
  );
}

function Magnifier({ plus = false }: { plus?: boolean }) {
  return (
    <svg className="h-[34px] w-[32px]" viewBox="0 0 32 32" preserveAspectRatio="none">
      <path d="M19 20l9 8" stroke="#8a6a10" strokeWidth="6" />
      <path d="M19.500 20.500l8 7" stroke="#e5bf2c" strokeWidth="3.500" />
      <circle cx="13" cy="13" r="9.500" fill="#dcebf6" stroke="#2f6a9d" strokeWidth="2.500" />
      <path d={plus ? 'M8 13h10M13 8v10' : 'M8 13h10'} stroke="#2f5f92" strokeWidth="3" />
    </svg>
  );
}

const Caret = () => (
  <svg className="h-[7px] w-[9px]" viewBox="0 0 9 7">
    <path d="M0 0h9L4.500 7z" fill="#222" />
  </svg>
);

const PRESSED = 'bg-[repeating-linear-gradient(45deg,#f5f5f5_0_1.5px,#dedfe0_1.5px_3px)] border-t border-l border-[#9a9a9a]';
const Rule = () => <span className="h-[42px] w-[1.5px] shrink-0 bg-[#8f9193]" />;

function Toolbar() {
  return (
    <div className="flex h-[46px] shrink-0 items-center pt-[4px] pl-[500px]">
      <svg className="h-[28px] w-[28px]" viewBox="0 0 28 26" preserveAspectRatio="none">
        <path d="M2 8l14-5l10 6v11l-14 4l-10-6z" fill="#a77a0e" />
        <path d="M4 8l12-4l8 5l-11 4z" fill="#f7dc6a" />
        <path d="M4 10l9 5v7l-9-5z" fill="#d9a61e" />
        <path d="M14 15l10-4v7l-10 4z" fill="#e8be3c" />
      </svg>
      <svg className="ml-[9px] h-[38px] w-[36px]" viewBox="0 0 36 36" preserveAspectRatio="none">
        <path d="M4 17l14-4l13 5l-9 14z" fill="#e3b82a" stroke="#8b6b12" />
        <path d="M3 14c0-5 6-9 10-9s10 2 11 8c4 0 6 2 5 4c-8 3-20 3-26-3z" fill="#4b9fcb" stroke="#256a94" />
        <circle cx="25" cy="25" r="8" fill="#c6211b" />
        <rect x="22" y="22" width="6" height="6" fill="#fff" />
      </svg>
      <span className="w-[115px] pl-[2px] text-[19px] text-[#262626]"><Tall>AutoTrading</Tall></span>
      <Rule />
      <span className="mx-[3px] h-[38px] w-[4px] bg-[repeating-linear-gradient(#8b8e90_0_2px,#f0f0f0_2px_4px)]" />
      <span className="flex w-[41px] justify-center">
        <Axes><path d="M15 20V6M15 8h4M11 17h4" stroke="#1f7d1f" strokeWidth="2.500" /></Axes>
      </span>
      <span className={'flex h-[42px] w-[42px] items-center justify-center ' + PRESSED}>
        <Axes><path d="M17 2v20" stroke="#1f6d1f" strokeWidth="2" /><rect x="13.500" y="5" width="7" height="13" rx="2" fill="#2c9a2c" stroke="#165c16" /></Axes>
      </span>
      <span className="flex w-[42px] justify-center">
        <Axes><path d="M8 20c2-9 6-14 9-11s4 6 9 7" stroke="#2c8a2c" strokeWidth="2" fill="none" /></Axes>
      </span>
      <span className="w-[4px]" />
      <Rule />
      <span className="ml-[7px] flex w-[43px]"><Magnifier plus /></span>
      <span className="flex w-[42px]"><Magnifier /></span>
      <svg className="ml-[3px] h-[31px] w-[30px]" viewBox="0 0 30 30" preserveAspectRatio="none">
        <rect x="1" y="2" width="13" height="12" fill="#3f9a26" /><rect x="15" y="2" width="13" height="12" fill="#1f4f90" />
        <rect x="1" y="15" width="13" height="12" fill="#1f4f90" /><rect x="15" y="15" width="13" height="12" fill="#3f9a26" />
        <path d="M3 8h9v4H3zM17 8h9v4h-9zM3 21h9v4H3zM17 21h9v4h-9z" fill="#eef4ee" />
      </svg>
      <span className="w-[8px]" />
      <Rule />
      <span className={'ml-[3px] flex h-[42px] w-[42px] items-center justify-center ' + PRESSED}>
        <Axes><path d="M12 5l10 6l-10 6z" fill="#3a9b2c" stroke="#1d6a17" /></Axes>
      </span>
      <span className={'ml-[3px] flex h-[42px] w-[42px] items-center justify-center ' + PRESSED}>
        <Axes><path d="M14 3v17" stroke="#1f5fa0" strokeWidth="2.500" /><path d="M17 11l7-5v3.500h4v3h-4V16z" fill="#c1482c" /></Axes>
      </span>
      <Rule />
      <svg className="ml-[9px] h-[36px] w-[34px]" viewBox="0 0 34 34" preserveAspectRatio="none">
        <path d="M4 3h14l6 6v15H4z" fill="#f1f2f3" stroke="#7a7d80" strokeWidth="1.500" />
        <path d="M9 20c3 0 3-12 7-12M9 13h7" stroke="#444" strokeWidth="1.800" fill="none" />
        <path d="M20 14h6v6h6v6h-6v6h-6v-6h-6v-6h6z" fill="#3ba21f" stroke="#1d6a12" />
      </svg>
      <span className="-mt-[5px] mr-[6px] ml-[7px]"><Caret /></span>
      <svg className="h-[36px] w-[34px]" viewBox="0 0 34 34" preserveAspectRatio="none">
        <circle cx="17" cy="17" r="15" fill="#1f5f97" />
        <circle cx="17" cy="17" r="13" fill="none" stroke="#5a9fd0" strokeWidth="1.500" />
        <circle cx="17" cy="17" r="10" fill="#eff3f6" />
        <path d="M17 10v7l6 2M11 13l6 4" stroke="#333" strokeWidth="2" fill="none" />
      </svg>
      <span className="-mt-[5px] mr-[15px] ml-[4px]"><Caret /></span>
      <svg className="h-[34px] w-[34px]" viewBox="0 0 34 32" preserveAspectRatio="none">
        <rect x="2" y="3" width="29" height="26" rx="2" fill="#f0f5f9" stroke="#2c6798" strokeWidth="2.500" />
        <rect x="2" y="3" width="29" height="6" fill="#3879ad" />
        <path d="M5 18l6-4l4 2l5-4l7 2" stroke="#8a5a2c" strokeWidth="2.200" fill="none" />
        <path d="M5 26l6-5l5 2l5-4l7 3" stroke="#3a8a4c" strokeWidth="1.800" fill="none" />
      </svg>
      <span className="-mt-[5px] mr-[10px] ml-[3px]"><Caret /></span>
      <Rule />
    </div>
  );
}

const FRAMES = ['M1', 'M5', 'M15', 'M30', 'H1', 'H4', 'D1', 'W1', 'MN'];

function Timeframes() {
  return (
    <div className="flex h-[46px] shrink-0 items-center pt-[4px] pl-[465px]">
      <span className="mr-[2px] h-[38px] w-[4px] bg-[repeating-linear-gradient(#8b8e90_0_2px,#f0f0f0_2px_4px)]" />
      {FRAMES.map((f) => (
        <span
          key={f}
          className={'flex h-[42px] w-[42.500px] items-center justify-center text-[16px] font-medium text-[#505355] ' + (f === 'H1' ? PRESSED : '')}
        >
          <Tall>{f}</Tall>
        </span>
      ))}
      <Rule />
    </div>
  );
}

/* [symbol, bid, ask, spread, high, low, background, text colour] */
const ROWS: string[][] = [
  ['EURUSD', '1.15571', '1.15574', '3', '1.16108', '1.15345', 'p', 'b'],
  ['GBPUSD', '1.31595', '1.31601', '6', '1.32576', '1.31510', 'p', 'r'],
  ['GBPJPY', '147.606', '147.619', '13', '149.003', '147.162', 'p', 'r'],
  ['USDJPY', '112.169', '112.174', '5', '112.496', '111.880', 'p', 'b'],
  ['NZDUSD', '0.65137', '0.65149', '12', '0.65322', '0.64995', 'p', 'r'],
  ['USDCAD', '1.30427', '1.30434', '7', '1.30488', '1.30028', 'p', 'r'],
  ['BTCUSD', '6195.685', '6208.465', '12780', '6239.675', '6112.025', 'v', 'r'],
  ['AUDUSD', '0.71046', '0.71053', '7', '0.71395', '0.71017', 'p', 'r'],
  ['WTI', '71.075', '71.100', '25', '72.004', '70.614', 't', 'b'],
  ['XAUUSD', '1218.54', '1218.69', '15', '1223.63', '1215.83', 'n', 'w'],
  ['BRENT', '80.19', '80.24', '5', '81.63', '79.37', 't', 'b'],
  ['EURJPY', '129.455', '129.462', '7', '130.498', '129.354', 'p', 'b'],
  ['EURAUD', '1.62653', '1.62667', '14', '1.63016', '1.61783', 'p', 'b'],
  ['XRPUSD', '0.41474', '0.42047', '573', '0.43764', '0.36875', 'v', 'r'],
  ['AUDCAD', '0.92657', '0.92671', '14', '0.92934', '0.92550', 'p', 'r'],
  ['EURNZD', '1.77671', '1.77693', '22', '1.78072', '1.77065', 'p', 'r'],
  ['CADCHF', '0.76015', '0.76030', '15', '0.76261', '0.75882', 'p', 'r'],
  ['XRPBTC', '0.00003', '0.00005', '2', '0.00003', '0.00002', 'v', 'b'],
  ['ADABTC', '0.00044', '0.00053', '9', '0.00044', '0.00044', 'v', 'b'],
  ['ETCUSD', '0.25000', '0.30000', '5000', '0.25000', '0.25000', 'v', 'b'],
  ['DSHUSD', '152.720', '160.210', '7490', '161.520', '149.130', 'v', 'r'],
  ['ETHBTC', '0.02106', '0.02330', '224', '0.02351', '0.02307', 'v', 'b'],
  ['XMRUSD', '101.210', '103.420', '2210', '104.300', '99.230', 'v', 'b'],
  ['EOSUSD', '2.901', '2.950', '49', '3.049', '2.876', 'v', 'r'],
  ['ZECUSD', '14.70', '14.95', '25', '15.10', '14.62', 'v', 'r'],
  ['LTCUSD', '52.10', '53.02', '92', '54.12', '51.44', 'v', 'r'],
];
const BG: Record<string, string> = { p: 'bg-[#dfc1c3]', v: 'bg-[#ab86a4]', t: 'bg-[#4b9d9e]', n: 'bg-[#04568b]' };
const FG: Record<string, string> = { b: 'text-[#2b3a85]', r: 'text-[#ae1620]', w: 'text-[#eef3f7]' };
const COLS = ['w-[87px]', 'w-[95px]', 'w-[68px]', 'w-[97px]', 'w-[90px]'];

function MarketWatch() {
  return (
    <aside className="flex w-[611px] shrink-0 flex-col overflow-hidden bg-[#d8dce0]">
      <div className="mt-[5px] flex h-[26px] shrink-0 items-center">
        <div className="h-full w-[576px] bg-linear-to-r from-[#b4c4d6] to-[#c2cfdd]" />
        <svg className="ml-[4px] h-[14px] w-[14px]" viewBox="0 0 14 14"><path d="M2 2l10 10M12 2L2 12" stroke="#222" strokeWidth="2.200" /></svg>
      </div>
      <div className="flex flex-1">
        <div className="flex w-[572px] flex-col">
          <div className="flex h-[34px] shrink-0 border-b border-[#b9bcbe] bg-[#f4f7f9] text-[18.5px] leading-[33px] text-[#3a3d40]">
            <span className="flex-1 border-r border-[#d5d8da] pl-[38px]"><Tall>Symbol</Tall></span>
            {['Bid', 'Ask', '!', 'High', 'Low'].map((h, i) => (
              <span key={h} className={COLS[i] + ' border-r border-[#d5d8da] pr-[7px] text-right'}><Tall>{h}</Tall></span>
            ))}
          </div>
          {ROWS.map((r, n) => (
            <div key={n} className={'flex h-[33.700px] shrink-0 text-[18.5px] leading-[33px] ' + BG[r[6]]}>
              <span className={'flex-1 border-r border-b border-[#aaa6a8] pl-[39px] ' + (r[6] === 'n' ? 'text-[#eef3f7]' : 'text-[#2d2d2d]')}><Tall>{r[0]}</Tall></span>
              {r.slice(1, 6).map((c, i) => (
                <span key={i} className={COLS[i] + ' border-r border-b border-[#aaa6a8] pr-[6px] text-right ' + FG[r[7]]}><Tall>{c}</Tall></span>
              ))}
            </div>
          ))}
        </div>
        <div className="flex w-[22px] flex-col border-l-[1.5px] border-white bg-[#a9adae]">
          <div className="flex h-[30px] items-center justify-center bg-[#dde0e3]">
            <svg className="h-[9px] w-[14px]" viewBox="0 0 14 9"><path d="M1 8l6-6l6 6" stroke="#444" strokeWidth="2" fill="none" /></svg>
          </div>
        </div>
        <div className="w-[17px] bg-linear-to-r from-[#f2f3f4] via-[#d3d7da] to-[#e4e7e9]" />
      </div>
    </aside>
  );
}

function Arrow({ down = false }: { down?: boolean }) {
  return (
    <svg className={'h-[16px] w-[14px] ' + (down ? 'rotate-180' : '')} viewBox="0 0 15 15" preserveAspectRatio="none">
      <path d="M7.500 0.800L14 7.500h-3.500V14h-6V7.500H1z" fill={down ? '#c8472a' : '#2a9a24'} stroke={down ? '#7c1f17' : '#125c12'} />
    </svg>
  );
}

const SYMBOLS: [string, boolean][] = [['EURGBP', false], ['EURJPY', false], ['EURNZD', false], ['EURRUB', false], ['EURUSD', true], ['GBPAUD', false], ['GBPCAD', false], ['GBPCHF', false], ['GBPJPY', false], ['GBPNZD', false], ['GBPUSD', true]];
const MAIL: [string, string][] = [
  ['2018.10.08 15:14:02', 'MQL5.community'], ['2018.10.05 07:31:06', 'Account update'], ['2018.10.04 10:10:44', 'News'], ['2018.10.02 09:13:20', 'News'], ['2018.09.28 13:25:25', 'News'],
  ['2018.09.28 12:38:14', 'News'], ['2018.09.25 11:02:51', 'News'], ['2018.09.24 16:45:10', 'News'], ['2018.09.21 08:12:33', 'News'], ['2018.09.20 14:20:07', 'News'],
  ['2018.09.18 10:05:42', 'News'], ['2018.09.14 09:31:18', 'News'], ['2018.09.12 12:40:26', 'News'],
];

function RightTerminal() {
  return (
    <div className="mt-[878.700px] ml-[80px] flex w-[412px] flex-col border-l-[2px] border-[#e8ebed] bg-[#d8dce0]">
      {SYMBOLS.map(([s, down]) => (
        <div
          key={s}
          className={'flex h-[26.900px] shrink-0 items-center gap-[4px] border-b border-[#a9a3a5] pl-[5px] text-[14.5px] ' + (s === 'EURUSD' ? 'bg-[#04568b] text-[#e6eef4]' : 'bg-[#dfc1c3] text-[#2d2d2d]')}
        >
          <Arrow down={down} />
          <span className="origin-left scale-x-[0.95] scale-y-[1.25]">{s}</span>
        </div>
      ))}
      <div className="flex h-[30px] shrink-0 border-t-[2px] border-[#333] text-[14.5px] leading-[24px] text-[#85888a]">
        <span className="h-[27px] w-[76px] border-r-[2px] border-b-[2px] border-l-[2px] border-[#222] bg-[#f3f4f5] pl-[9px] text-[#222]">
          <span className="inline-block origin-left scale-x-[0.92] scale-y-[1.22]">Symbols</span>
        </span>
        <span className="w-[81px] pl-[10px]"><span className="inline-block origin-left scale-x-[0.92] scale-y-[1.22] whitespace-nowrap">Tick Chart</span></span>
        <span className="mt-[3px] h-[18px] w-[1.5px] bg-[#444]" />
      </div>
      <div className="mt-[2px] flex flex-1 border-t-[1.5px] border-[#9b9ea0] pt-[8px]">
        <div className="w-[17px] bg-linear-to-b from-[#b9c7d6] to-[#aebccb]">
          <div className="flex h-[30px] items-center justify-center bg-[#d8dce0]">
            <svg className="h-[10px] w-[10px]" viewBox="0 0 14 14"><path d="M2 2l10 10M12 2L2 12" stroke="#222" strokeWidth="2.800" /></svg>
          </div>
        </div>
        <div className="flex flex-1 flex-col border-l border-[#8f9294] text-[14px]">
          <div className="flex h-[31px] shrink-0 items-center border-t border-b border-[#b5b8ba] bg-[#f2f5f7] text-[#333]">
            <span className="h-full w-[185px] border-r border-[#c3c6c8] pl-[5px] leading-[29px]"><Tall>Time</Tall></span>
            <span className="pl-[7px]"><Tall>Subject</Tall></span>
          </div>
          {MAIL.map(([t, s], i) => (
            <div key={t} className={'flex h-[27.300px] shrink-0 items-center border-b border-[#c2c5c7] text-[#2c2c2c] ' + (i % 2 ? 'bg-[#f4f6f7]' : 'bg-[#d3d6d8]')}>
              <span className="flex h-full w-[185px] items-center gap-[4px] border-r border-[#c3c6c8] pl-[3px]">
                <svg className="h-[19px] w-[17px]" viewBox="0 0 18 19">
                  <rect x="1" y="1" width="16" height="17" rx="2" fill="#c9a90e" stroke="#8a740c" />
                  <path d="M4.500 6h9M4.500 9h9M4.500 12h7" stroke="#6e5c0a" strokeWidth="1.200" />
                </svg>
                <Tall>{t}</Tall>
              </span>
              <span className="pl-[7px] whitespace-nowrap"><Tall>{s}</Tall></span>
            </div>
          ))}
        </div>
      </div>
    </div>
  );
}

function MenuStrip() {
  return <div className="h-[38px] shrink-0 border-t-[3px] border-b-[1.5px] border-t-[#f6f7f8] border-b-[#8d9092] bg-[#d8dce0]" />;
}

export default function App() {
  return (
    <div className="h-[1353px] w-[2440px] overflow-hidden bg-white">
      <main className="h-[1353px] w-[2440px] overflow-hidden bg-[#313639] font-['Noto_Sans','Open_Sans',sans-serif] [clip-path:inset(1.5px_0px_0px_2px_round_20px)]">
        <div className="flex h-[2368px] w-[2900px] origin-top-left items-start bg-[#313639] [transform:matrix(0.9094,-0.416,0.6433,0.7656,-849.5,367.4)]">
          <div className="flex w-[2408px] shrink-0 flex-col">
            <div className="flex h-[475.500px] shrink-0 flex-col shadow-[0_3px_4px_#1e2630]">
              <UpperChart />
              <TabBar />
              <StatusBar />
            </div>
            <div className="mt-[79.500px] flex h-[1285px] shrink-0 flex-col bg-[#d8dce0] shadow-[0_3px_4px_#1e2630]">
              <MenuStrip />
              <Toolbar />
              <div className="w-[1236px] border-t-[1.5px] border-[#8d9092]" />
              <div className="-mt-[1.500px] flex flex-col"><Timeframes /></div>
              <div className="flex h-[1081.500px] shrink-0">
                <MarketWatch />
                <div className="relative w-[1797px] shrink-0 border-r-[2px] border-b-[3px] border-r-[#f0f2f3] border-b-[#eceeef] bg-[#8b9197]">
                  <div className="absolute top-0 left-0 h-[4px] w-full bg-[#d8dce0]" />
                  <ChartWindow title="EURUSD,H1" active place="top-[4px] left-[1px] z-10" panel={<TradePanel tone="blue" base="1.15" sell={['57', '1']} buy={['57', '4']} />}>
                    <EurUsd />
                  </ChartWindow>
                  <ChartWindow title="USDCAD,H1" place="top-[4px] left-[898px]" panel={<TradePanel tone="red" base="1.30" sell={['42', '7']} buy={['43', '4']} />}>
                    <UsdCad />
                  </ChartWindow>
                  <ChartWindow title="GBPUSD,H1" place="top-[541px] left-[1px] z-10" panel={<TradePanel tone="red" base="1.31" sell={['59', '5']} buy={['60', '1']} />}>
                    <GbpUsd />
                  </ChartWindow>
                  <ChartWindow title="XAUUSD,H1" place="top-[541px] left-[898px]">
                    <XauUsd />
                  </ChartWindow>
                </div>
              </div>
              <TabBar />
              <StatusBar traffic />
            </div>
            <div className="mt-[80.500px] flex shrink-0 flex-col bg-[#d8dce0]">
              <MenuStrip />
              <div className="h-[89.500px] shrink-0 border-b-[5px] border-[#4a4c4e] bg-[#d8dce0]" />
              <LowerChart />
            </div>
          </div>
          <RightTerminal />
        </div>
      </main>
    </div>
  );
}
